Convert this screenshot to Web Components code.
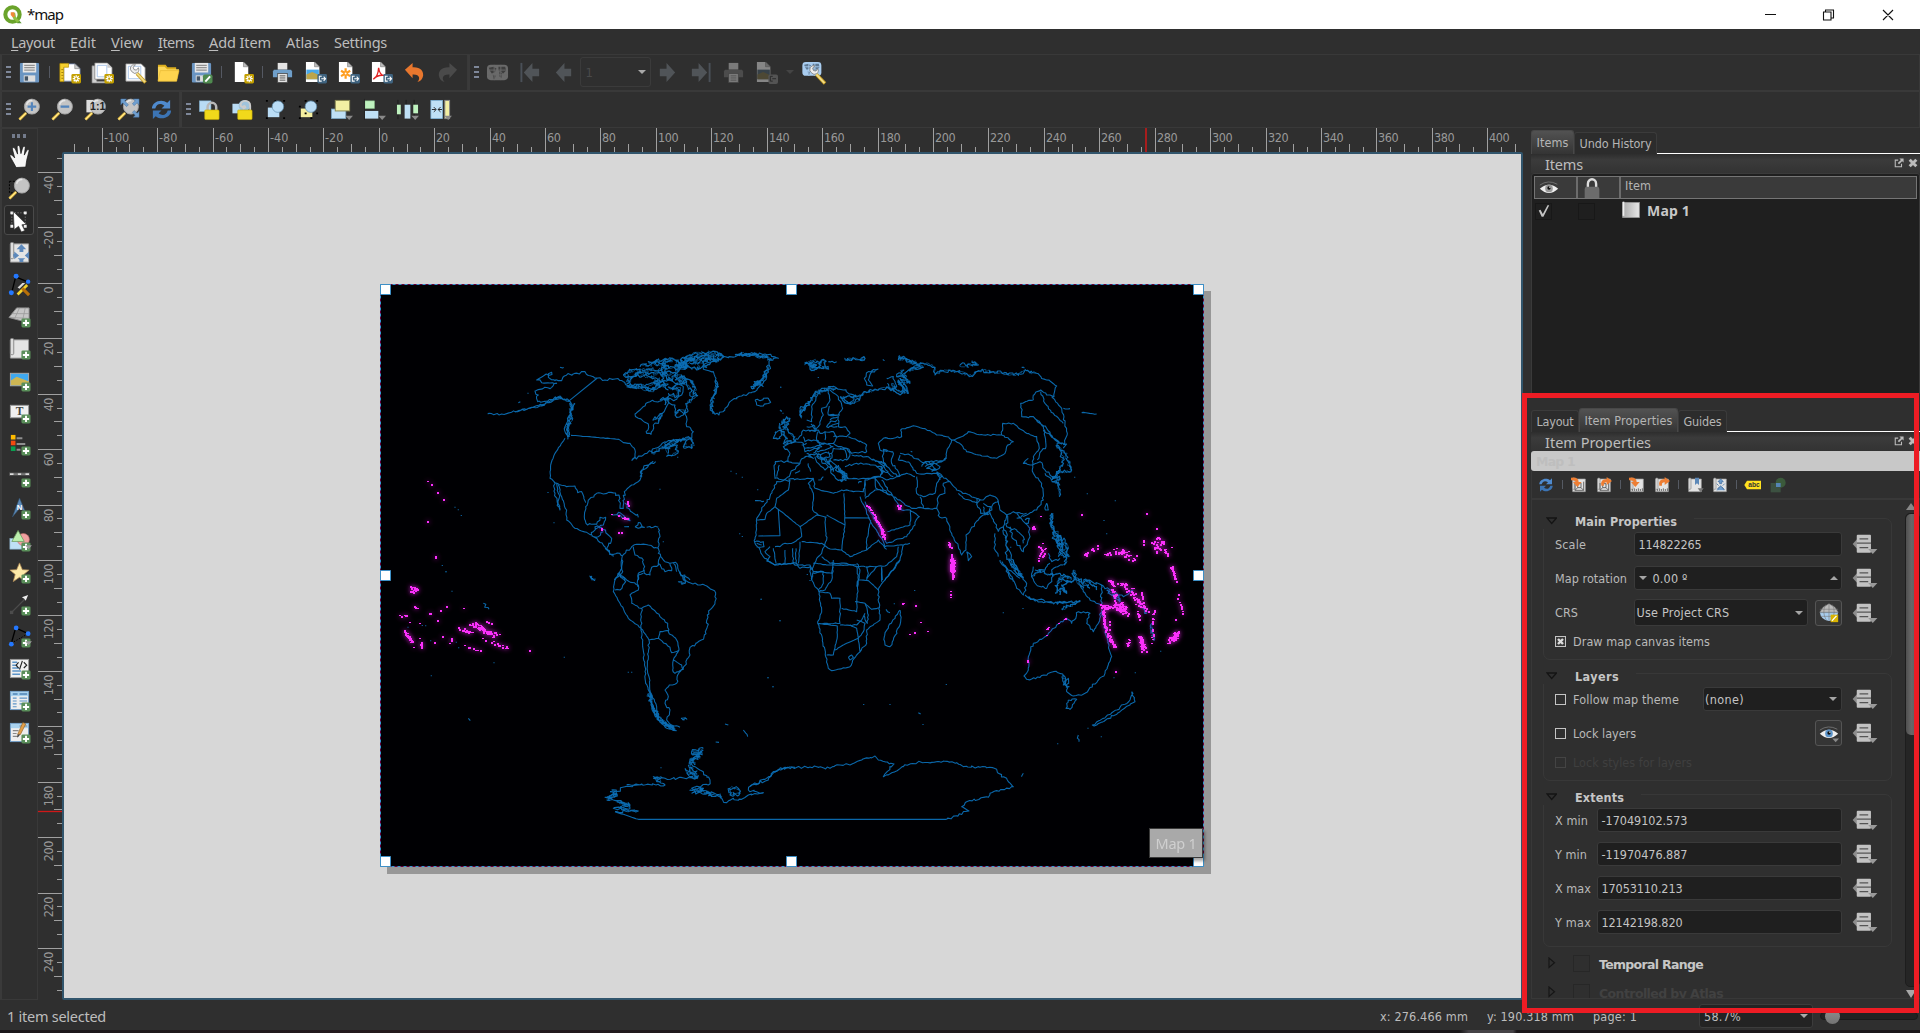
<!DOCTYPE html>
<html lang="en">
<head>
<meta charset="utf-8">
<title>*map</title>
<style>
html,body{margin:0;height:100%;overflow:hidden;background:#2f2f2f}
</style>
</head>
<body>
<layout-window></layout-window>
<script>
const UI = '"Noto Sans","Open Sans",sans-serif';
const DLG = '"DejaVu Sans Condensed","DejaVu Sans",sans-serif';
function define(name, css, html, ready) {
  const tpl = document.createElement('template');
  tpl.innerHTML = '<style>*{box-sizing:border-box}' + css + '</style>' + html;
  customElements.define(name, class extends HTMLElement {
    connectedCallback() {
      if (this.shadowRoot) return;
      this.attachShadow({mode: 'open'}).appendChild(tpl.content.cloneNode(true));
      if (ready) ready.call(this, this.shadowRoot);
    }
  });
}

/* Text whose letter spacing is tuned to a nominal run width. */
define('fit-text', ':host{display:inline-block;white-space:pre;flex:none}', '<slot></slot>', function () {
  const w = +this.getAttribute('w');
  if (!w) return;
  const n = this.textContent.length;
  const nat = this.getBoundingClientRect().width;
  this.style.letterSpacing = ((w - nat) / n).toFixed(3) + 'px';
});

/* ---------- icons, 24 x 24 grid ---------- */
const PLUS = '<rect x="14" y="14" width="9.500" height="9.500" rx="1.500" fill="#5a8f5a"/><path d="M18.800 15.500v6.500M15.500 18.800h6.500" stroke="#fff" stroke-width="2"/>';
const GEAR = '<rect x="14" y="13.500" width="10" height="10" rx="1.500" fill="#c4a000"/><path d="M19 14.800v7.400M15.300 18.500h7.400M16.400 15.900l5.200 5.200M21.600 15.900l-5.200 5.200" stroke="#fff" stroke-width="1.300"/><circle cx="19" cy="18.500" r="1.200" fill="#c4a000"/>';
const EXP = '<rect x="14" y="13.500" width="10" height="10" rx="1.500" fill="#3f637f"/><path d="M18.500 16h-2.500v5h2.500M18 18.500h4M20.500 16.300l2 2.200-2 2.200" stroke="#fff" stroke-width="1.100" fill="none"/>';
const PAGE = '<path d="M4 1h9l5 5v16H4z" fill="#fff"/><path d="M13 1v5h5z" fill="#bbb" stroke="#777" stroke-width=".6"/>';
const MAG = '<path d="M1.500 22.500l7-7" stroke="#f2c94c" stroke-width="2.800"/><path d="M1.500 22.500l7-7" stroke="#fff3b0" stroke-width=".8"/><circle cx="14.500" cy="9" r="7.800" fill="#c4c4c4" stroke="#a5a5a5"/><path d="M9 7a6 6 0 0 1 6-4.500" stroke="#e6e6e6" stroke-width="1.600" fill="none"/>';
const FLOPPY = '<rect x="2" y="2" width="20" height="20.500" rx="1" fill="#6a95c2"/><rect x="5" y="2" width="14" height="10" fill="#e6e6e6"/><path d="M6.500 4.500h11M6.500 7h11M6.500 9.500h11" stroke="#777"/><rect x="6" y="15" width="12" height="6.500" fill="#dedede"/><rect x="7" y="16" width="3.500" height="4.500" fill="#456"/>';
const PRN = (a,b) => `<rect x="7" y="2" width="10" height="7" fill="${b}"/><path d="M3 9h18l1 2v6H2v-6z" fill="${a}"/><rect x="7" y="13" width="10" height="9.500" fill="${b}" stroke="#444" stroke-width=".8"/><path d="M9 15.500h6M9 17.700h6M9 20h6" stroke="#555"/>`;
const ARW = '<path d="M16 18.500h8l-4 4.500z" fill="#8a8a8a"/>';
const ARR = (c) => `<path d="M20 8v8h-7v6L4 12l9-10v6z" fill="${c}"/>`;
const SHEET = '<path d="M2.500 3h19v19h-19z" fill="#e4e4e4" stroke="#9a9a9a"/><rect x="2.500" y="1.500" width="3.500" height="17" rx="1.500" fill="#ddd" stroke="#888"/>';
const EYE = (c) => `<path d="M1 13q11-10 22 0-11 10-22 0z" fill="#eee"/><circle cx="12" cy="12.500" r="4.600" fill="${c}"/><circle cx="12" cy="12" r="2" fill="#111"/><circle cx="13" cy="11" r=".8" fill="#fff"/><path d="M1 8.500q10-7 21-1" fill="none" stroke="#777"/>`;
const UNDO = (c) => `<path d="M2 9l8-7v4.500c8-.5 11.500 3.500 11 9-.5 3.500-3 6-6 6.500 3-3 3-8.500-5-8v4z" fill="${c}"/>`;
const REFR = '<path d="M2 11C2 4 12 0 18 5l3-3v9h-9l3-3C11 5 7 6 5.500 11z" fill="#4f8ace"/><path d="M22 13c0 7-10 11-16 6l-3 3v-9h9l-3 3c4 3 8 2 9.500-3z" fill="#3c74b4"/>';
const MAPW = (a,b) => `<rect x="1" y="4" width="22" height="16" rx="4" fill="${a}"/><path d="M3 7l5-1 3 2-2 4-3 1-2-3zM7 14l3 1-1 4h-1zM13 6l7 0 1 4-3 3-3-2-2-1zM14 11l3 2-1 5-2-2z" fill="${b}"/><path d="M1.500 9.500h21M1.500 14.500h21M8.500 4v16M15.500 4v16" stroke="${a}" stroke-width="1"/>`;
const WRENCH = '<path d="M7 6a4.500 4.500 0 0 1 5-2l-2.500 2.500 1 2.500 2.500 .5L15 7c1 2 .5 4-1 5.200l-3 .8-3-2A4.500 4.500 0 0 1 7 6z" fill="#eee" stroke="#777" stroke-width=".8"/><path d="M13.500 13l9 9.500" stroke="#c49a20" stroke-width="3.600"/><path d="M13.500 13l8.500 9" stroke="#f2dc84" stroke-width="2"/>';
const BADSQ = '<path d="M14 14h9v9h-9z" fill="#d9b300"/><path d="M15.500 21.500l5.500-6" stroke="#fff" stroke-width="1.600"/>';
const CORN = '<path d="M2 2h2v2H2zM20 2h2v2h-2zM2 20h2v2H2zM20 20h2v2h-2zM11 2h1.500v1.500H11z" fill="#000"/>';
const ICONS = {
  qgis: '<path d="M17 16l5.500 6h-5l-4-4z" fill="#589632"/><circle cx="12" cy="12" r="8.200" fill="none" stroke="#6aa32b" stroke-width="4.600"/><path d="M11 10h4l1 5 4 4.500-2.500 1.800-5-5z" fill="#8dc040"/><path d="M10 9.500h4l.8 4.700-2.500 1-2.300-2.700z" fill="#f0883a"/>',
  save: FLOPPY,
  newlayout: '<path d="M2 3h4v18H2z" fill="#e9b800"/><path d="M6 3h12l5 5v13H6z" fill="#fff" stroke="#7a90b8" stroke-width=".8"/><path d="M17.500 3v5H23z" fill="#ccc" stroke="#777" stroke-width=".6"/><path d="M2 2.500h9v4H6v15H2z" fill="#f5cf2e" stroke="#b38b00" stroke-width=".7"/><path d="M3.500 9h2M3.500 12h2M3.500 15h2M3.500 18h2" stroke="#8a6a00" stroke-width=".8"/>' + GEAR,
  duplicate: '<path d="M1 5h5v16h13v2H1z" fill="#cfcfcf" stroke="#777" stroke-width=".7"/><path d="M4 2h13l5 5v12H4z" fill="#fff" stroke="#777" stroke-width=".8"/><path d="M6.500 4.500h10v12h-10z" fill="none" stroke="#a9c4e8"/><path d="M17 2v5h5z" fill="#ccc"/>' + GEAR,
  manager: '<path d="M2 3h16l4 4v14H2z" fill="#fff" stroke="#999" stroke-width=".8"/><path d="M4.500 5.500h13v13h-13z" fill="none" stroke="#a9c4e8"/>' + WRENCH,
  folder: '<path d="M1 4h8l2 2.500h9V10H1z" fill="#dcae1e"/><path d="M1 21V6h7l2.500 2.500H23L20.500 21z" fill="#fbd75b"/><path d="M1 21L3.500 10H23l-2.500 11z" fill="#ffd54f" stroke="#e4b52d" stroke-width=".6"/>',
  saveas: FLOPPY + '<rect x="13.500" y="14" width="10" height="9.500" rx="2" fill="#4f8a4f"/><path d="M16 21.500l5-5.500" stroke="#fff" stroke-width="2"/>',
  newpage: PAGE + GEAR,
  print: PRN('#6f9fca', '#e4e4e4'), printoff: PRN('#4c4c4c', '#7a7a7a'),
  image: '<g transform="translate(-2)">' + PAGE + '<rect x="4.500" y="9" width="13" height="10" fill="#4aa8e8"/><path d="M4.500 19v-5l6-2.500 7 3V19z" fill="#bda54a"/></g>' + EXP,
  imageoff: '<g opacity=".42"><g transform="translate(-2)">' + PAGE + '<rect x="4.500" y="9" width="13" height="10" fill="#445b6c"/><path d="M4.500 19v-5l6-2.500 7 3V19z" fill="#776c3c"/></g><rect x="14" y="14" width="10" height="10" rx="2" fill="#888"/><path d="M18.500 16h-2.500v5h2.500M18 18.500h4" stroke="#222" fill="none"/></g>',
  svg: '<g transform="translate(-2)">' + PAGE + '<path d="M11 7.500v11M6.200 10.200l9.600 5.600M15.800 10.200l-9.600 5.600" stroke="#ff9d1e" stroke-width="2.300"/><circle cx="11" cy="13" r="1" fill="#fff"/></g>' + EXP,
  pdf: '<g transform="translate(-2)">' + PAGE + '<path d="M5.500 19q5-3 5.500-12 1 8 6 8-7-1-11.500 4z" fill="none" stroke="#e02020" stroke-width="1.400"/></g>' + EXP,
  undo: UNDO('#e8772e'), redo: '<g transform="matrix(-1 0 0 1 24 0)">' + UNDO('#4a4a4a') + '</g>',
  atlas: MAPW('#6a6a6a', '#3e3e3e'),
  first: '<path d="M2.500 2v20" stroke="#4a5058" stroke-width="2"/><g transform="translate(1)">' + ARR('#505458') + '</g>', prev: ARR('#505458'),
  next: '<g transform="matrix(-1 0 0 1 24 0)">' + ARR('#505458') + '</g>',
  last: '<g transform="matrix(-1 0 0 1 24 0)"><path d="M2.500 2v20" stroke="#4a5058" stroke-width="2"/><g transform="translate(1)">' + ARR('#505458') + '</g></g>',
  atlasset: '<g transform="translate(-.5 -2.500) scale(.9)">' + MAPW('#a9cdf0', '#5d7893') + '</g><g transform="translate(1.500 1)">' + WRENCH + '</g>',
  zin: MAG + '<path d="M14.500 4.500v9M10 9h9" stroke="#5485bc" stroke-width="2.200"/>',
  zout: MAG + '<path d="M10 9h9" stroke="#5485bc" stroke-width="2.400"/>',
  zone: '<path d="M2.500 2h8v13h-8z" fill="#ddd"/>' + MAG + '<text x="14.300" y="12.800" font-family="Liberation Sans,sans-serif" font-weight="700" font-size="11" fill="#222" text-anchor="middle">1:1</text>',
  zfull: MAG + '<path d="M4 1h6l-2 2 4 4-2 2-4-4-2 2zM23 1h-6l2 2-3 3 2 2 3-3 2 2zM23 20h-6l2-2-3-3 2-2 3 3 2-2z" fill="#6f9fd0" stroke="#44709f" stroke-width=".5"/>',
  refresh: REFR,
  lock: '<rect x="1.500" y="3" width="12" height="11" fill="#b9dcf5" stroke="#7fb0d0" stroke-width=".6"/><path d="M10 13V9.500a4.500 4.500 0 0 1 9 0V13" fill="none" stroke="#b8b8b8" stroke-width="2.600"/><rect x="7" y="12.500" width="15" height="10" rx="1" fill="#f1d91b" stroke="#c4a900" stroke-width=".6"/>',
  unlock: '<rect x="1.500" y="6" width="12" height="10" fill="#b9dcf5"/><circle cx="14" cy="8" r="6" fill="#9fc3dc"/><path d="M20 14V8a5 5 0 0 0-10 0l2 1.500q2-2.500 3 0l-2.500 2" fill="none" stroke="#ccc" stroke-width="2"/><rect x="7" y="12.500" width="15" height="10" rx="1" fill="#f1d91b" stroke="#c4a900" stroke-width=".6"/>',
  group: CORN + '<rect x="4" y="10" width="12" height="10" fill="#b9dcf5"/><circle cx="14.500" cy="9" r="6" fill="#b9dcf5" stroke="#5f8fb0" stroke-width=".7"/>',
  ungroup: '<rect x="4" y="11" width="12" height="9" fill="#f5efa0"/><circle cx="14.500" cy="9" r="6" fill="#b9dcf5" stroke="#5f8fb0" stroke-width=".7"/><path d="M8 2h2v2H8zM20 2h2v2h-2zM2 8h2v2H2zM2 20h2v2H2zM20 15h2v2h-2zM14 20h2v2h-2zM8 15h2v2H8z" fill="#000"/>',
  raise: '<rect x="1.500" y="11.500" width="15" height="10" fill="#bfe0f5" stroke="#7aa6c2" stroke-width=".8"/><rect x="5.500" y="2.500" width="15" height="11" fill="#f2efa3" stroke="#8b8a55"/>' + ARW,
  align: '<rect x="2" y="3" width="10" height="8" fill="#bff2bf" stroke="#84b884" stroke-width=".6"/><rect x="2" y="13.500" width="14" height="8" fill="#bfe0f5"/><path d="M1.500 1v22" stroke="#222"/>' + ARW,
  distribute: '<path d="M2 2v20M10.500 2v20M19 2v20" stroke="#1b1b1b"/><rect x="1" y="7" width="4" height="10" fill="#bff2bf"/><rect x="9" y="7" width="6" height="14.500" fill="#bfe0f5"/><rect x="18" y="7" width="5" height="9" fill="#bff2bf"/>' + ARW,
  resize: '<rect x="2" y="2.500" width="12" height="19" fill="#bfe0f5" stroke="#7fb4d8" stroke-width=".8"/><path d="M3 12h4M5 9.500L7.500 12 5 14.500M13.500 12h-4M12 9.500L9.500 12l2.500 2.500" stroke="#222" fill="none"/><rect x="16.500" y="2.500" width="5" height="19" fill="#f2efa3" stroke="#888"/>' + ARW,
  hand: '<path d="M8.500 23.500L3 13.500q-2.500-4.500 1-3L7 13.500 4.500 4q1-2.500 2.800-.5L10 9.500l-.5-8q1.500-2 2.800 0L13.500 9l2-7q1.800-1.500 2.500.5L17 10.500l3-5.500q2-1 2 1L19.500 16 18.500 23z" fill="#f6f6f6" stroke="#111" stroke-width=".7"/>',
  zoombox: '<path d="M1.500 4.500h8v12h-8z" fill="none" stroke="#000" stroke-dasharray="2 1.500"/>' + MAG,
  select: '<path d="M4 4h14v14H4z" fill="none" stroke="#999" stroke-dasharray="1 2"/><path d="M2.500 2.500h3v3h-3zM16.500 2.500h3v3h-3zM2.500 16.500h3v3h-3zM16.500 16.500h3v3h-3z" fill="#eee"/><path d="M5.500 2.500l13.500 13.500-4.500 .5 3 6-3.500 1.500-3-6-4.500 3.500z" fill="#fff" stroke="#333" stroke-width=".7"/>',
  movec: SHEET + '<path d="M14 3.500l5 5h-3v3h-4v-3H9zM12 22v-2.500l-2-1.500h8l-2 1.500V22zM6.500 11l5 4-5 4v-2.500h-1v-3h1zM22 11l-4.500 4 4.500 4z" fill="#5c88bb"/>',
  nodes: '<path d="M4 20L8 4l12 5" stroke="#000" stroke-width="1.400" fill="none"/><circle cx="8.500" cy="3.500" r="2.600" fill="#2478ff"/><circle cx="21" cy="9" r="2.300" fill="#2478ff"/><circle cx="3.500" cy="20.500" r="2.600" fill="#2478ff"/><path d="M10 22.500l10-10" stroke="#f3d32c" stroke-width="2.800"/><path d="M15 16l7 7" stroke="#b87009" stroke-width="3.200"/><path d="M10 15l5-4.500 3 0-6 6z" fill="#ddd"/>',
  map3d: '<path d="M1 13l8-10 13 0v15L12 16z" fill="#c6c6c6" stroke="#8c8c8c"/><path d="M4 9l18 0M2 13l20 1M12 3l-5 11M18 3l-3 14" stroke="#999" stroke-width=".8" fill="none"/>' + PLUS,
  addmap: SHEET + PLUS,
  picture: '<rect x="2.500" y="4.500" width="19" height="13" fill="#3fa9f0" stroke="#aaa"/><path d="M3 17v-5l6-4 13 5v4z" fill="#cdb653"/>' + PLUS,
  label: '<rect x="2.500" y="4.500" width="19" height="13" fill="#f0f0f0" stroke="#999"/><text x="12" y="15" font-family="Liberation Serif,serif" font-size="12" font-weight="700" fill="#444" text-anchor="middle">T</text>' + PLUS,
  legend: '<rect x="3" y="2" width="4.800" height="4.800" fill="#ffbb00"/><rect x="3" y="8" width="4.800" height="4.800" fill="#f14a10"/><rect x="3" y="14" width="4.800" height="4.800" fill="#0a9f50"/><path d="M9 5.500h6M9 11.500h9M9 17.500h4" stroke="#8f8f8f" stroke-width="2"/>' + PLUS,
  scalebar: '<rect x="1" y="7.500" width="22" height="4" fill="#484848"/><path d="M2 9.500h4M10 9.500h4M18 9.500h4" stroke="#ddd" stroke-width="2"/><path d="M6 9.500h4M14 9.500h4" stroke="#777" stroke-width="2"/>' + PLUS,
  north: '<path d="M12 1l6 14-6-3-7.500 9z" fill="#5b88b5" stroke="#334f6b" stroke-width=".6"/><text x="12" y="14" font-family="Liberation Sans,sans-serif" font-weight="700" font-size="8" fill="#fff" text-anchor="middle">N</text>' + PLUS,
  shapes: '<rect x="2" y="10" width="15" height="11" fill="#bfe0f5" stroke="#89b2cc" stroke-width=".7"/><circle cx="16" cy="11" r="6.300" fill="#f0a0a0" stroke="#c06a6a" stroke-width=".7"/><path d="M10.500 1.500l6.500 11.500H4z" fill="#bdf0ae" stroke="#6c9a60" stroke-width=".8"/>' + PLUS + '<path d="M18 17h7l-3.500 4z" fill="#999"/>',
  star: '<path d="M12 2l3 7 7 .5-5.500 4.500 2 7.500L12 17l-6.500 4.500 2-7.500L2 9.500 9 9z" fill="#fce9a8" stroke="#b08a55" stroke-width=".8"/>' + PLUS,
  arrow: '<path d="M4 20L18 6" stroke="#4c4c4c" stroke-width="1.300"/><path d="M2 18.500h3.500V22H2z" fill="#4c4c4c"/><path d="M21 2l-2.500 6-1.500-2-2.500-1.500z" fill="#eee"/>' + PLUS,
  nodeadd: '<path d="M3.500 19L8 3l13 6" stroke="#000" stroke-width="1.400" fill="none"/><path d="M3.500 19L21 9" stroke="#000" stroke-dasharray="1.500 1.500"/><circle cx="8.500" cy="3" r="2.500" fill="#2478ff"/><circle cx="21" cy="9" r="2.500" fill="#2478ff"/><circle cx="3.500" cy="20" r="2.500" fill="#2478ff"/>' + PLUS + '<path d="M18 17h7l-3.500 4z" fill="#999"/>',
  html: '<rect x="2.500" y="2.500" width="19" height="19" fill="#f0f0f0" stroke="#999"/><path d="M4.500 5.500h5M4.500 8.500h5M4.500 11.500h7M4.500 14.500h9M4.500 18h8" stroke="#5c94c8" stroke-width="1.600"/><path d="M11 5.500L8.500 8.500 11 11.500M15 4l-3 9M16.500 5.500l3 3-3 3" stroke="#222" fill="none" stroke-width="1.200"/>' + PLUS,
  table: '<rect x="2.500" y="2.500" width="19" height="19" fill="#eee" stroke="#6f9dc8"/><rect x="3" y="3" width="18" height="4.500" fill="#a9d2ee"/><path d="M5 5.200h5M12 5.200h8" stroke="#4d83b5" stroke-width="1.600"/><path d="M5 9.500h4M12 9.500h8M5 12.500h4M12 12.500h8M5 15.500h4M12 15.500h6M5 18.500h4" stroke="#5c94c8" stroke-width="1.200"/>' + PLUS,
  mtable: '<rect x="2.500" y="2.500" width="19" height="19" fill="#eee" stroke="#6f9dc8"/><rect x="3" y="3" width="18" height="4.500" fill="#a9d2ee"/><path d="M5 10h6M5 13h4M5 16h6M12 5.200h8" stroke="#888" stroke-width="1.200"/><path d="M10 14L15.500 1.500l3 1.500L13 14z" fill="#e3a04a" stroke="#8a5a1d" stroke-width=".6"/><path d="M10 14l3 0-3.500 3.500z" fill="#444"/>' + PLUS,
  eyeg: EYE('#999'), eyeb: EYE('#5b93c8') + ARW,
  padlock: '<path d="M7.500 11V7.500a4.500 5 0 0 1 9 0V11" stroke="#ddd" stroke-width="2.600" fill="none"/><path d="M4 13q0-2.500 2.500-2.500h11Q20 10.500 20 13v10H4z" fill="#6c6c6c"/>',
  sheet: '<defs><linearGradient id="g"><stop offset="0" stop-color="#aaa"/><stop offset="1" stop-color="#e8e8e8"/></linearGradient></defs><rect x="2" y="3" width="20" height="18" fill="url(#g)" stroke="#999"/><path d="M3 2v17" stroke="#eee" stroke-width="2"/>',
  check: '<path d="M3 11l3-1 4 7L18 2l3 0L11 22H8z" fill="#c4c4c4"/>',
  setview: SHEET + '<path d="M6 9v11h13V7M6 20l4-4M19 20l-4-4M10 8v8h5V9z" stroke="#555" stroke-width="1.300" fill="none"/><path d="M0 1q11-2 11.500 6.500h4.500L9.500 15 3 7.500h4Q6 4.500 0 5z" fill="#ee7e33"/>',
  getview: SHEET + '<path d="M6 9v11h13V9M6 20l4-4M19 20l-4-4M10 10v6h5v-6z" stroke="#555" stroke-width="1.300" fill="none"/><path d="M8 13q-2-10 8-10V0L24 6l-8 6V8q-5 0-4 5z" fill="#ee7e33"/>',
  setscale: SHEET + '<path d="M5 21v-3M8 21v-4M11 21v-3M14 21v-4M17 21v-3M20 21v-4" stroke="#555" stroke-width="1.300"/><path d="M0 1q11-2 11.500 6.500h4.500L9.500 15 3 7.500h4Q6 4.500 0 5z" fill="#ee7e33"/>',
  getscale: SHEET + '<path d="M5 21v-3M8 21v-4M11 21v-3M14 21v-4M17 21v-3M20 21v-4" stroke="#555" stroke-width="1.300"/><path d="M8 13q-2-10 8-10V0L24 6l-8 6V8q-5 0-4 5z" fill="#ee7e33"/>',
  bookmark: SHEET + '<path d="M12 1h6v11l-3-2.500-3 2.500z" fill="#5c88b8"/><path d="M16 17h9l-4.500 6z" fill="#777"/>',
  interactive: SHEET + '<path d="M13 3l4 4h-2.500v3h-3V7H9zM8 20l5-7 5 7M7 10l3 3M19 10l-3 3M7 19l4-4M19 19l-4-4" stroke="#4e79a8" fill="#6f9fd0" stroke-width="1.300"/>',
  abc: '<path d="M-1 12l4-6.500h21v13H3z" fill="#ffe21f"/><text x="13.500" y="15.500" font-family="Liberation Sans,sans-serif" font-weight="700" font-size="10" fill="#333" text-anchor="middle">abc</text>',
  clip: '<circle cx="16" cy="8.500" r="7.500" fill="#3b5a3b"/><rect x="1" y="9" width="15" height="14" fill="#3c5141"/><path d="M9 9h7v6H9z" fill="#5585b5"/>',
  globe: '<path d="M5 5L12 1l7 4 4 6-22 0z" fill="#bbb" stroke="#888" stroke-width=".6"/><path d="M1 11h22q-1 9-11 10.500Q2 20 1 11z" fill="#a8cdee"/><path d="M1 7.500h22M1 11.500h22M2 16h20M8 2q-5 9 1 19M16 2q5 9-1 19M12 1v20" stroke="#777" fill="none" stroke-width=".7"/>' + BADSQ,
  ddef: '<path d="M-1.500 12L3.500 6.500v11z" fill="#8c8c8c"/><rect x="3" y="2" width="15.500" height="19.500" rx="1" fill="#c2c2c2"/><path d="M6 6.500h9.500M3 11h15.500M6 16h9.500" stroke="#555" stroke-width="1.300"/><path d="M15.500 17.500h10l-5 5.500z" fill="#999"/>',
  float: '<path d="M10 5H3v16h15v-7" fill="none" stroke="#bbb" stroke-width="2.600"/><path d="M13 1h10v10l-3.500-3.500L12 15l-3-3 7.500-7.500z" fill="#bbb"/>',
  close: '<path d="M4 4l16 16M20 4L4 20" stroke="#bbb" stroke-width="7"/>'
};
define('q-icon', ':host{display:inline-flex;flex:none;width:24px;height:24px}svg{width:100%;height:100%;overflow:visible}', '<svg viewBox="0 0 24 24"></svg>', function (r) {
  r.querySelector('svg').innerHTML = ICONS[this.getAttribute('n')] || '';
});

/* ---------- window chrome ---------- */
define('title-bar', `:host{display:flex;align-items:center;height:29px;background:#fff;color:#111;font:15px ${UI};padding-left:1px}
 q-icon{width:21px;height:21px;margin:-1px 4px 0 1px}fit-text{margin-top:-2px}.s{flex:1}svg{margin-right:25px}`,
 `<q-icon n="qgis"></q-icon><fit-text w="36">*map</fit-text><div class="s"></div>
 <svg width="130" height="14" viewBox="0 0 130 14" fill="none" stroke="#111" stroke-width="1.100"><path d="M0 6.500h11M58.500 4h7.500v8h-7.500zM60.500 4V2h8v8h-2M118 2l10 10M128 2l-10 10"/></svg>`);
define('menu-bar', `:host{display:flex;align-items:center;height:25px;padding:0 0 0 11px;gap:15px;color:#bdbdbd;font:14.500px ${UI}}u{text-decoration-thickness:1px;text-underline-offset:2px}`,
 `<fit-text w="44"><u>L</u>ayout</fit-text><fit-text w="26"><u>E</u>dit</fit-text><fit-text w="32"><u>V</u>iew</fit-text><fit-text w="36"><u>I</u>tems</fit-text><fit-text w="62"><u>A</u>dd Item</fit-text><fit-text w="33">Atlas</fit-text><fit-text w="53">Settings</fit-text>`);

/* A tool bar lists its buttons in the "icons" attribute; "|" draws a separator. */
define('tool-bar', `:host{display:flex;align-items:center;height:37px;border:1px solid #393939;border-left:2px solid #3a3a3a;padding:0 0 1px 4px;flex:none}
 .h{width:5px;height:12px;background:repeating-linear-gradient(#7e8799 0 2px,transparent 2px 5px);flex:none}
 .b{width:33px;display:flex;justify-content:center;align-items:center;flex:none}
 .s{width:7.500px;height:12px;background:linear-gradient(90deg,transparent 3px,#555963 3px 4px,transparent 4px);flex:none}
 .c{width:71px;height:30px;border:1px solid #3b3b3b;border-radius:3px;display:flex;align-items:center;justify-content:space-between;padding:0 4px 0 5px;color:#4a4a4a;font:13px ${DLG};margin:0}
 .t{border:4px solid transparent;border-top:4px solid #a9a9a9;border-bottom:0}.d{width:14.500px;display:flex;justify-content:center}.d .t{border-top-color:#444}
 q-icon{width:23px;height:23px}`,
 '<div class="h"></div><div style="width:1.500px"></div>', function (r) {
  for (const k of this.getAttribute('icons').split(' ')) {
    const e = document.createElement('div');
    if (k === '|') e.className = 's';
    else if (k === 'combo') { e.className = 'c'; e.innerHTML = '<span>1</span><i class="t"></i>'; }
    else if (k === 'drop') { e.className = 'd'; e.innerHTML = '<i class="t"></i>'; }
    else { e.className = 'b'; e.innerHTML = `<q-icon n="${k}"></q-icon>`; }
    r.appendChild(e);
  }
});
define('tool-box', `:host{display:flex;flex-direction:column;align-items:center;width:38px;flex:none;border:1px solid #393939;border-left:2px solid #3a3a3a;padding:5px 1px 0 0}
 .h{width:14px;height:4px;background:repeating-linear-gradient(90deg,#737b8b 0 3px,transparent 3px 5.500px);margin-bottom:2px;flex:none}
 .b{width:30px;height:30px;margin:1px 0;display:flex;align-items:center;justify-content:center;border:1px solid transparent;border-radius:3px;flex:none}
 .on{border-color:#4a4a4a;background:#292929}q-icon{width:23px;height:23px}`, '<div class="h"></div>', function (r) {
  'hand zoombox select movec nodes map3d addmap picture label legend scalebar north shapes star arrow nodeadd html table mtable'.split(' ').forEach(k => {
    const e = document.createElement('div');
    e.className = 'b' + (k === 'select' ? ' on' : '');
    e.innerHTML = `<q-icon n="${k}"></q-icon>`;
    r.appendChild(e);
  });
});

/* ---------- rulers: 2.771 px per millimetre ---------- */
const MM = 2.771;
define('h-ruler', `:host{display:block;height:24px;margin-left:24px}svg{display:block}text{font:12.500px ${DLG};fill:#999}`, '<svg width="1461" height="24"></svg>', function (r) {
  let s = '';
  for (let v = -110; v <= 410; v += 5) {
    const x = Math.floor(379.3 + v * MM) - 62 + .5;
    if (x > 1459) break;
    s += `<path d="M${x} ${v % 20 === 0 ? 0 : v % 10 === 0 ? 16 : 19}V24" stroke="#a0a0a0"/>`;
    if (v % 20 === 0) { const n = String(v).length - (v < 0 ? .35 : 0); s += `<text x="${x + 1.500}" y="14" textLength="${(n * 6.900).toFixed(1)}">${v}</text>`; }
  }
  r.querySelector('svg').innerHTML = s + '<path d="M1084 0V24" stroke="#d01818" stroke-width="1.500"/>';
});
define('v-ruler', `:host{display:block;width:24px;flex:none}svg{display:block}text{font:12.500px ${DLG};fill:#999}`, '<svg width="24" height="848"></svg>', function (r) {
  let s = '';
  for (let v = -45; v <= 255; v += 5) {
    const y = Math.floor(283.4 + v * MM) - 152 + .5;
    s += `<path d="M${v % 20 === 0 ? 0 : v % 10 === 0 ? 16 : 19} ${y}H24" stroke="#a0a0a0"/>`;
    if (v % 20 === 0) { const n = String(v).length - (v < 0 ? .35 : 0), w = n * 6.900; s += `<text transform="translate(14.500 ${y + w + 3}) rotate(-90)" textLength="${w.toFixed(1)}">${v}</text>`; }
  }
  r.querySelector('svg').innerHTML = s + '<path d="M0 659.500H24" stroke="#d01818" stroke-width="1.300"/>';
});

/* ---------- world map ---------- */
/* Each sheet holds lines at a third of a pixel; entries are "roughness: x y, x y, ...". */
const SHEETS = [
 [375, 280, `
 4:338 402,380 402,430 392,470 382,510 372,550 352,583 364|4:420 395,460 385,500 378,540 358,560 355|6:583 362,550 350,520 362,488 365,490 345,480 333,505 325,530 322,545 310,500 308,485 300,505 288,530 277,520 292,540 302,560 302,568 288,600 280,630 275,655 290,667 294
 0:667 294,583 362|5:583 362,592 385,580 410,570 440,572 460,578 478|7:600 370,585 395,590 410,575 450,585 465|7:590 370,588 400,580 430,578 470|4:555 262,566 262|4:430 368,436 365
 5:667 294,690 300,720 297,745 305,760 318,780 312,800 322,830 328,850 310,880 300,905 310,925 320,920 345,900 360,870 355,860 362,825 365,800 385,780 402,790 415,820 432,815 460,828 463,835 435,850 430,860 405,872 385,880 365,900 375,900 395,905 412,925 405,932 390,935 440,955 455,950 475,920 480,880 482,840 505,805 525,770 542
 1:588 466,732 478|2:732 478,745 488,765 490,780 510,780 530,770 542|7:830 520,870 500,900 490,940 470,955 490,950 505,925 500,935 480|7:875 530,910 515,900 495,870 505,880 520|7:860 500,890 485,930 478
 9:900 300,925 290,945 300,960 320,955 335,968 347,950 360,935 380,930 400|8:910 300,935 315,950 330,950 350|9:745 285,770 270,795 272,770 292,745 285|9:755 305,790 285,830 290,860 305,810 318,755 320|10:795 260,830 250,870 255,850 270,800 268|10:870 240,905 240,920 260,900 285,870 275,870 250|10:860 280,890 300,920 285,935 305,900 315|10:880 320,915 330,905 350,880 340|10:840 300,855 320,880 312|9:870 262,935 265,900 255|9:780 280,830 278,880 285|9:755 312,800 325,835 330,860 318|9:860 265,860 300,880 330|9:820 245,860 242,890 240
 9:835 420,860 400,850 425|9:855 360,880 350,870 375|8:900 400,915 390,930 400|10:905 245,940 260,925 245,960 235,900 260
 9:915 240,950 225,1000 217,1040 222,1045 232,1010 245,980 262,950 265,930 255,915 240|9:940 240,970 232,1010 230|9:930 232,965 240,1000 235,1030 240|9:945 250,985 245,1015 232|8:960 228,1000 224,1040 228
 5:1045 230,1080 230,1130 218,1170 222,1210 235,1185 240,1185 260,1175 290,1160 315,1140 335,1100 348,1065 365,1050 385,1032 405,1015 398,1005 375,1015 350,1025 325,1020 290,1015 275,985 268,985 255,1010 245,1045 230|7:1080 225,1130 226,1180 232|9:1180 255,1170 290,1130 325,1155 305,1165 320|9:1175 270,1160 300,1135 315|8:1012 400,1010 370,1020 330,1030 320,1022 300|7:1090 222,1140 222,1190 238
 5:1140 360,1155 362,1180 355,1187 367,1165 378,1145 375,1140 360
 5:842 545,800 570,795 600,770 615,748 635,745 685,735 685,732 645,700 637,665 640,640 660,632 680,628 710,638 735,665 733,675 712,692 712,685 735,660 745|6:835 545,805 565,795 590
 2:570 475,540 520,527 555,525 595,540 608|3:540 608,575 620,600 618,608 638,620 635,632 668|3:550 615,560 650,575 690,575 720,600 745,635 757,650 765,690 800,710 825,735 820,742 828|5:537 605,540 640,548 670,555 690,550 640,545 610
 5:650 765,660 740,680 742,700 765,710 775,695 805,715 830|4:650 768,670 770,685 755|5:710 705,735 698,765 722,750 715,725 702|6:750 670,765 690,790 712|6:748 740,762 740|6:780 740,790 728,808 742,780 740|6:815 742,835 742,850 742|4:850 745,855 770,848 805
 4:742 828,740 880,718 900|5:742 828,770 800,785 793,820 795,850 805,850 820,870 845,905 850,915 880,945 900|4:775 800,780 825,805 840,808 880,825 885,830 862,850 855,855 830|4:850 850,870 875,890 872,885 850|4:895 850,905 875|4:805 880,790 885,790 900|4:728 880,750 900|6:645 890,655 895`],
 [750, 280, `
 6:155 415,150 385,175 370,190 345,215 325,245 320,280 330,312 345,312 358,290 370,270 350|8:150 400,165 385,180 365,195 340,230 328,260 325|7:152 410,155 390,172 378|3:170 420,185 425,185 380,205 340,235 330,240 360,230 380,215 385,220 405,205 440,195 448,183 432|3:240 330,265 350,278 385,265 405,235 405,238 378
 7:270 350,300 372,330 355,345 335,385 330,410 322,430 332,450 345,460 335,445 300,475 340,450 295,480 310,455 285,490 262,520 250,555 262,555 285,580 272,620 275,665 288,685 272,730 275,790 285,830 272,860 280|5:860 280,890 300,920 318,912 350,890 345,872 330,850 345,850 360|7:470 240,520 262,480 268|7:460 270,440 290,470 290|7:280 350,310 350,340 345|7:425 310,440 330,465 340
 4:385 267,355 275,343 295,350 315,368 318,355 300,362 280,385 267|5:410 295,430 290,440 320,425 330,412 310
 4:850 360,812 370,815 410,850 410,880 440,885 470,888 500,875 512,862 540|3:872 335,885 370,910 400,940 430|3:905 350,935 385,945 430,952 460,940 495|3:852 412,890 445,915 480,935 492,900 465,880 450|4:940 385,960 386
 3:605 480,590 470,560 465,540 452,490 437,452 450,455 470,430 475,400 475,385 490,390 510,412 515|3:605 480,590 515,585 540,550 545,525 545,515 560
 3:605 480,635 495,650 515,690 525,740 535,765 520,770 500,790 485,755 465,700 465,655 455,640 468,605 480|3:755 465,758 430,790 430,830 460,860 470,868 505,850 530,848 555,820 550,835 535
 4:848 555,850 580,875 610,880 660,860 690,830 705,800 715|4:848 555,870 545,885 570,910 590,905 600,885 580
 5:428 515,400 508,400 540,425 575,445 590,445 575,425 550,428 515|4:450 520,480 525,520 548,545 555,560 550,590 535|4:450 525,445 540,480 550,500 580,560 580,570 600|5:535 545,560 570,530 565,550 552|5:525 560,550 548,570 560,545 575
 3:500 590,500 640,520 650,555 640,560 610,575 590,560 575|3:390 590,410 600,440 590,470 580,495 590|3:510 650,520 685|4:395 600,430 650,465 675,485 685,520 685,560 685,570 712,590 715
 3:560 685,565 650,585 640,580 610,600 605|3:560 575,600 605,620 630,680 655,700 660,720 645,735 650,745 665|3:625 640,640 655,680 668,680 655
 3:590 715,605 760,625 800,635 825,648 810,648 765,685 720,700 705,720 700,735 730,745 755|5:690 660,680 672,692 700,712 700,722 680,700 670|5:700 680,705 705,715 695|4:650 815,665 830,655 842,650 815
 5:745 665,750 690,770 705,760 740,770 760,770 800,790 840,815 890|5:770 705,790 695,812 700,830 700|5:770 705,770 740,800 750,820 770,820 790|5:800 700,835 740,840 770,820 815,800 790,785 770,780 740|4:825 720,838 715,835 730,825 730|4:735 760,735 810,745 830|5:745 660,725 680,720 700
 5:745 755,760 740,768 790,770 830,805 870|6:755 845,775 870,810 895|4:890 670,895 690,886 690,890 670
 7:905 700,903 740,915 770,905 730,905 700|9:920 765,950 790,955 830,930 810,920 765|9:910 770,935 800,925 830|9:915 755,935 775,945 810|5:895 820,905 845,930 835|7:845 890,870 870,900 885,930 880,950 890|8:930 820,950 835,945 855
 7:905 600,925 575,955 575,965 570,945 520,920 495,935 520,940 550,915 590|7:905 605,925 608,928 650|7:905 590,930 595,920 610|5:920 490,950 492,940 505
 4:120 600,80 605,60 650,20 715,15 790,40 830,75 855,130 850,150 865,180 860,185 900|3:115 598,190 595,195 625,250 640,275 630,340 635,345 600,390 590|3:330 650,360 720,385 760,402 790,405 800,460 795,480 790|2:460 795,450 840,430 870,405 900
 1:75 680,150 740,200 705,230 712|1:230 705,285 735,282 640|1:20 720,45 718,50 700,75 680,80 655,115 630,120 600|0:85 690,90 767,25 768|2:190 595,175 610,190 640,188 690,205 705|0:285 713,360 714|2:150 740,155 770,125 790,105 790,90 800,75 800
 2:225 712,230 780,215 820,200 835|2:285 735,275 810,300 830,350 810,350 780,362 720|2:155 785,215 790,235 805|2:105 810,105 850|2:128 805,130 850|2:150 785,145 850|2:60 800,45 815,60 830,50 845|3:15 785,40 785,42 800,20 800|2:70 805,78 850|3:20 790,35 795|2:138 805,138 850
 2:215 830,240 850,290 850,320 860,380 860,405 858,440 830,445 800|2:350 810,385 780,410 808|2:235 805,275 810|2:190 880,215 875,245 880,250 860|2:320 860,325 900|2:380 860,350 895|0:395 865,397 900|2:200 835,185 870
 3:345 665,405 775,410 790,470 770,508 710,480 690,455 690,430 650,400 630,375 590|2:412 755,480 735,482 690|2:345 655,375 630,400 630|2:345 600,345 650|2:375 595,378 625,420 645
 4:75 545,75 595,105 598,130 570,150 550,115 545,75 545|2:88 555,80 590|5:115 545,120 520,100 500,135 485,155 465|5:150 550,165 530,200 520,215 545,235 560,225 570,205 550,195 530|6:235 560,250 585,275 605,295 595,270 565,265 555|5:215 535,240 545,245 520,220 520,200 530,240 550|4:285 560,320 550,370 555,395 560,390 590,340 595,290 595|8:265 565,285 585,270 600|8:255 560,275 580,290 600|8:275 570,290 590
 4:155 465,160 450,205 450,210 460,250 455,260 470,250 490,215 490,190 480,165 485,160 470|3:205 455,200 480,215 500,165 515,160 490,135 485|3:250 470,290 470,300 460,285 440,265 440,265 410,240 420|4:250 490,265 500,290 505,305 520,350 515,350 495,320 480,295 470|4:250 540,290 540,300 520,290 505,250 505,245 520|4:305 525,350 530,385 545,415 575|4:365 540,405 550,395 570,430 590|5:235 540,265 560,245 570,235 545|4:170 520,190 535,175 530|5:260 420,240 425,230 440,262 440|6:170 440,190 435,200 450,175 450
 3:165 505,195 500,225 490,250 500|3:200 515,225 510,245 500|4:205 520,220 535,240 530,235 515|4:225 545,245 560,250 575|3:270 505,285 510,290 535|4:375 545,395 545,410 560|4:380 560,400 575,390 585|3:225 455,225 480|3:235 405,270 405|3:190 520,210 500|4:240 440,265 430|4:155 495,170 490
 7:95 430,110 410,120 415,108 440,130 470,135 485,100 490,112 475,95 455,88 430|8:95 435,105 425,100 450|6:75 455,95 450,90 475,70 475,75 455|5:175 550,182 575|6:205 600,220 590|4:325 610,335 605|5:135 580,150 572
 9:165 250,220 240,235 265,180 268,200 255,165 250|9:175 255,205 262,215 248|9:285 240,345 235,330 242|9:445 230,500 250|8:445 240,465 232|9:630 255,685 255,665 246|5:995 398,1040 402|5:235 245,260 245|3:482 514,487 516|5:815 262,822 262|4:90 390,95 395|5:15 662,42 664`],
 [375, 560, `
 2:740 0,740 25,720 60,715 95,735 130,760 175,798 205|3:798 205,803 260,810 320,812 370,825 400,830 440,850 480,875 505,905 512|8:820 400,835 440,850 470,880 500,900 510|8:845 465,865 490,900 505|7:835 450,855 482,895 505,870 490|7:825 400,830 430,838 460
 4:915 35,925 60,945 68,990 76,1022 98,1020 125,997 165,997 200,985 238,945 262,945 285,925 325,908 345,905 370,883 375,870 390,880 410,870 430,885 450,875 480,890 495,915 502|7:910 65,930 70,925 50
 3:800 145,798 205,822 240,817 320,828 400,845 440,848 470|3:730 38,755 60,790 75,790 90,765 105,770 130,800 145,820 135,855 170,878 190,880 215,905 240,912 270,890 278,885 262,850 235,822 240|2:850 235,855 215,880 212|3:912 270,895 300,893 330,900 340,925 328,920 315,895 300
 3:720 90,735 90,752 65,730 40|3:788 80,790 40,808 30|8:645 50,660 60|7:918 475,936 478|5:1050 492,1060 495|5:1105 510,1118 530|5:1022 546,1032 547|6:325 130,342 148|4:280 475,286 482
 6:985 570,960 590,945 605,960 620,985 635,1005 660,1000 675,950 685,960 695,1000 700,1040 715,1055 728,1075 715,1100 718,1120 705,1165 698,1120 690,1130 675,1180 660,1195 635,1230 622,1260 622|9:985 565,950 575,975 590,945 600,960 615|9:930 625,955 640,965 655,935 640|9:945 690,985 685,970 695|9:955 580,980 575,955 605|9:940 615,960 635,970 650|9:950 700,980 692,1010 705
 5:970 645,960 655,870 655,835 650,845 665,870 675,800 672,750 680,715 700,690 712,715 720,755 730,765 745,715 745,790 753,720 755|9:705 695,725 705,695 720|9:725 725,765 735,735 740|9:835 655,860 652,850 665|9:710 690,725 700,705 715|6:755 674,800 674|1:720 755,790 778|0:790 778,1715 778|8:1065 685,1090 685,1095 700,1065 705,1065 685|9:995 695,1040 710`],
 [750, 560, `
 5:590 778,657 753,635 740,650 725,715 712,720 700,790 680,770 655,745 640,740 628,690 622,640 620,620 608,560 605,510 605,460 620,400 650,432 612,385 600,375 588,335 600,300 615,270 615,240 625,200 620,150 622,85 628,60 650,0 678
 3:50 0,75 15,130 8,150 15,180 15,190 35,185 60,205 90,215 150,203 190,225 270,235 325,245 332,300 320,320 285,350 250,350 210,390 180,385 90,400 65,450 0
 2:205 95,240 100,245 115,270 115,270 190,203 190|2:270 195,320 195,335 180,345 160|1:203 190,262 198,262 230,253 270,250 285,230 285|2:255 270,290 250,325 235,320 205,300 195|2:320 180,345 190,340 215,325 235,330 275|2:315 125,345 130,365 148,390 143|2:325 60,355 62,385 90|2:325 60,320 130,320 155,275 145|3:345 130,355 165,352 190,342 165|3:250 0,245 60,225 90,205 95|3:320 10,330 30,325 60,320 80|2:350 20,355 40,350 60|1:395 20,395 65|3:295 292,305 285,310 292,300 300,295 292|3:190 35,220 35,220 70,205 90|2:190 10,245 15,320 15
 4:450 150,452 185,430 240,420 260,405 255,403 230,415 200,435 175,450 150|5:408 148,420 158
 4:850 250,885 230,920 195,950 175,965 190,985 155,1020 160,1010 190,1030 215,1045 190,1055 150,1070 230,1085 290,1065 340,1005 400,970 408,950 395,955 355,940 375,938 342,910 335,870 352,830 358,822 348,835 330,835 290,850 250|8:940 345,945 375,958 380|4:955 420,980 418,960 448,948 445,955 420|4:1145 395,1155 425,1110 455,1040 495,1027 495,1100 450,1140 420,1145 395
 5:750 0,775 40,800 85,820 105,830 70,805 40,790 0|6:765 20,790 65|6:825 105,850 118,900 125,925 130|7:920 130,990 122,935 148|6:835 115,880 128,960 126|6:850 20,845 50,860 75,890 85,905 60,905 30,940 15|5:855 30,885 30,900 10|7:915 100,925 60,965 65,935 75,950 100,930 85,930 105|8:925 55,945 50,965 55|6:985 60,1000 70,1010 60,1055 75,1100 100,1120 110,1150 90|4:1054 75,1054 135,1020 120,1000 95,990 75|8:970 30,980 60,1000 85|8:1070 90,1110 125,1100 105|8:805 40,820 55|7:985 55,1020 85|8:1170 130,1190 160|8:1205 190,1210 240|6:505 458,512 462|5:815 650,820 640|5:985 525,987 545|8:965 40,975 50,970 65|8:1000 60,1030 75,1040 90|7:775 0,800 40,815 50`]
];
const SPECKS = [[375,280,'517 636,535 727,853 626,1066 572,1082 580,1100 590,1146 628,1215 320,1216 390,1222 398,1092 760,1100 768,238 680,248 688,257 705,200 855,211 874,906 530,457 338,863 784'],[750,280,'820 262,398 238,203 291,90 320,1060 720,1068 760,972 590,1010 640,1094 661,780 800,400 240'],[375,560,'211 34,229 92,97 200,140 195,150 196,165 241,242 245,355 307,566 290,167 346,768 335,758 335,1213 181,1177 352,1192 379,1157 116,856 622,249 262'],[750,560,'88 181,31 116,52 352,67 379,339 432,418 432,517 492,587 372,1154 337,1090 352,1052 529,921 550,817 144,758 157,431 130,492 90,1230 272,170 42,178 60,1012 503']];
/* Points of the highlighted layer: [x1,y1,x2,y2,spread,count] on the same sheets. */
const GLOW = [
 [375,280,[[160,607,171,614,0,2],[188,640,188,640,0,1],[206,660,206,660,0,1],[158,726,158,726,0,1],[182,832,182,832,1,2],[761,667,763,682,2,4],[711,705,711,705,0,1],[731,709,731,709,0,1],[748,718,759,714,4,6],[681,748,681,753,1,4],[733,759,740,759,0,2]]],
 [750,280,[[353,677,375,708,2,12],[375,708,392,742,2,16],[392,742,406,776,3,26],[447,682,450,686,7,9],[597,791,603,805,2,8],[605,825,608,850,3,14],[607,845,609,875,7,60],[608,870,610,897,2,14],[873,710,873,710,0,1],[850,748,850,748,6,6],[873,800,873,840,13,15],[996,706,996,706,0,1],[1190,702,1190,702,0,1],[1220,746,1220,746,0,1],[1010,824,1010,824,5,8],[1030,812,1045,803,7,5],[1070,824,1095,820,7,10],[1100,818,1130,818,12,17],[1125,825,1165,832,12,8],[1183,782,1183,795,2,3],[1210,780,1235,790,14,14],[1220,800,1255,820,17,20],[1265,862,1275,898,2,9]]],
 [375,560,[[118,88,118,90,10,18],[120,142,128,147,1,3],[78,172,98,167,4,6],[105,188,105,188,0,1],[134,191,134,191,0,1],[168,162,168,162,2,2],[197,152,197,152,1,1],[215,140,215,140,0,1],[190,183,190,183,0,1],[266,147,266,147,0,1],[92,215,112,248,4,26],[140,250,140,266,2,10],[117,263,117,263,0,1],[135,237,135,237,0,1],[180,250,180,250,0,1],[203,230,203,230,0,1],[225,252,233,238,1,3],[250,203,256,212,3,5],[265,210,292,218,4,12],[285,192,330,210,8,28],[315,205,358,230,8,26],[334,186,352,192,3,3],[358,220,374,224,3,3],[352,248,400,264,8,11],[270,261,320,275,3,7],[324,238,334,242,0,2],[464,272,464,272,0,1]]],
 [750,560,[[606,0,608,30,3,24],[608,35,610,58,2,6],[602,97,602,114,0,3],[461,132,461,132,3,3],[497,138,497,138,0,1],[513,189,513,189,0,1],[495,219,495,219,3,3],[480,226,480,226,0,1],[533,216,533,216,0,1],[948,177,948,177,3,3],[926,192,926,192,0,1],[896,206,896,206,3,3],[890,229,890,229,0,1],[832,303,832,303,3,3],[1078,65,1095,75,6,11],[1112,70,1140,92,10,18],[1088,95,1100,112,8,12],[1055,140,1085,145,6,24],[1062,145,1065,195,3,28],[1065,195,1075,230,3,16],[1075,230,1096,262,5,28],[1095,135,1108,152,4,12],[1105,135,1130,158,12,52],[1145,100,1178,142,9,34],[1175,98,1178,115,3,5],[1180,130,1192,155,5,7],[1165,160,1175,178,5,6],[1212,152,1212,192,4,8],[1208,205,1210,250,4,7],[1138,235,1136,262,6,8],[1172,230,1180,272,5,40],[1178,250,1190,270,4,10],[1262,245,1284,220,8,50],[1267,20,1281,70,2,12],[1285,110,1300,162,4,8],[1278,180,1278,180,0,1],[1099,336,1099,336,2,3],[1080,185,1080,210,2,3],[1137,0,1137,0,0,1]]]
];
function rng(seed) { return () => (seed = (seed * 16807) % 2147483647) / 2147483647; }
function coast(text, seed, minRough) {
  const rnd = rng(seed);
  let d = '';
  for (const item of text.split(/[|\n]/)) {
    const t = item.trim();
    if (!t) continue;
    const i = t.indexOf(':'), rough = +t.slice(0, i);
    if (rough < minRough) continue;
    const p = t.slice(i + 1).split(',').map(q => q.trim().split(' ').map(Number));
    d += 'M' + p[0].join(' ');
    for (let k = 1; k < p.length; k++) {
      const [ax, ay] = p[k - 1], [bx, by] = p[k];
      const n = rough ? Math.max(1, Math.round(Math.hypot(bx - ax, by - ay) / (rough > 6 ? 5 : 7))) : 1;
      for (let j = 1; j < n; j++) {
        const f = j / n;
        d += 'L' + (ax + (bx - ax) * f + (rnd() - .5) * rough * 1.5).toFixed(1) + ' ' + (ay + (by - ay) * f + (rnd() - .5) * rough * 1.5).toFixed(1);
      }
      d += 'L' + bx + ' ' + by;
    }
  }
  return d;
}
define('world-map', ':host{display:block;width:824px;height:583px;background:#000003}svg{display:block}', '<svg width="824" height="583"></svg>', function (r) {
  let s = '';
  SHEETS.forEach(([x, y, t], i) => {
    const at = `transform="translate(${x - 380} ${y - 284}) scale(.33333)" fill="none" stroke="#0b70b8" stroke-linejoin="round"`;
    s += `<path ${at} d="${coast(t, 77 + i * 31, 0)}" stroke-opacity=".92" stroke-width="3.300"/><path ${at} d="${coast(t, 505 + i * 13, 7)}" stroke-opacity=".6" stroke-width="3"/>`;
  });
  SPECKS.forEach(([x, y, t]) => { s += `<path transform="translate(${x - 380} ${y - 284}) scale(.33333)" d="${t.split(',').map(q => 'M' + q + 'h4v3h-4z').join('')}" fill="#0a5a94"/>`; });
  let dots = '';
  GLOW.forEach(([x, y, list], i) => {
    const rnd = rng(911 + i * 17);
    let d = '';
    for (const [a, b, c, e, sp, n] of list) for (let k = 0; k < n; k++) {
      const f = n > 1 ? k / (n - 1) : 0;
      const g = () => (rnd() + rnd() - 1) * sp * 1.3;
      const px = Math.round((a + (c - a) * f + g()) / 3) * 3 - 3, py = Math.round((b + (e - b) * f + g()) / 3) * 3 - 3;
      d += `M${px} ${py}h6v${rnd() > .4 ? 6 : 3}h-6z`;
    }
    dots += `<path transform="translate(${x - 380} ${y - 284}) scale(.33333)" d="${d}"/>`;
  });
  s += `<filter id="b" x="-5%" y="-5%" width="110%" height="110%"><feGaussianBlur stdDeviation="2.400"/></filter><g fill="#e320e3" filter="url(#b)">${dots}</g><g fill="#fb30fb">${dots}</g>`;
  r.querySelector('svg').innerHTML = s;
});

define('layout-canvas', `:host{display:block;flex:1;height:848px;position:relative;background:#d7d7d7;border:2px solid #31556c;border-radius:2px;overflow:hidden}
 .sh{position:absolute;left:323px;top:137px;width:824px;height:583px;background:#979797}
 .pg{position:absolute;left:316px;top:130px;width:824px;height:583px}
 .sel{position:absolute;inset:0;width:824px;height:583px}
 .tip{position:absolute;left:769px;top:544px;width:54px;height:30px;background:rgba(176,176,176,.96);border:1px solid #3a3a3a;box-shadow:2px 3px 3px rgba(0,0,0,.35);display:flex;align-items:center;justify-content:center;color:#cfcfcf;font:14.500px ${UI}}`,
 `<div class="sh"></div><div class="pg"><world-map></world-map>
 <svg class="sel" viewBox="0 0 824 583"><rect x=".5" y=".5" width="823" height="582" fill="none" stroke="#6b0038"/><rect x=".5" y=".5" width="823" height="582" fill="none" stroke="#3498d0" stroke-dasharray="3 3"/>
 <g fill="#fff" stroke="#3d8fc6"><path d="M.5.5h10v10H.5zM406.500.5h10v10h-10zM813.500.5h10v10h-10zM.5 286.500h10v10H.5zM813.500 286.500h10v10h-10zM.5 572.500h10v10H.5zM406.500 572.500h10v10h-10zM813.500 572.500h10v10h-10z"/></g></svg>
 <div class="tip"><fit-text w="41">Map 1</fit-text></div></div>`);

/* ---------- docks ---------- */
define('dock-tab', `:host{display:flex;align-items:center;justify-content:center;height:22px;border:1px solid #3b3b3b;border-bottom:0;border-radius:3px 3px 0 0;color:#b5b5b5;font:12.500px ${DLG};background:#2c2c2c}
 :host([on]){height:24px;background:linear-gradient(#525252,#343434);border-color:#484848;padding-bottom:0}`, '<slot></slot>');
define('dock-tabs', ':host{display:flex;align-items:flex-end;height:25px;gap:0}.l{flex:1;align-self:flex-end;height:1px;background:#fff}', '<slot></slot><div class="l"></div>');
define('dock-title', `:host{display:flex;align-items:center;height:19px;background:linear-gradient(#2d2d2d,#3b3b3b 30%,#333);color:#bdbdbd;font:14.500px ${UI};padding:1px 0 0 14px;flex:none}.s{flex:1}q-icon{width:10px;height:10px;margin:-3px 2.500px 0 1.500px}`,
 '<slot></slot><div class="s"></div><q-icon n="float"></q-icon><q-icon n="close"></q-icon>');

define('items-dock', `:host{display:flex;flex-direction:column;height:265px;flex:none;width:389px}
 .tree{flex:1;background:#1f1f1f;border:1px solid #3a3a3a;border-radius:3px 3px 0 0;padding:2px}
 .hd{display:flex;height:23px;background:#3a3a3a;border:1px solid #757575;color:#b5b5b5;font:12.500px ${DLG}}
 .hd>div{display:flex;align-items:center;border-right:2px solid #6c6c6c}.hd>div:last-child{border:0;flex:1;padding:0 0 4px 4px}
 .row{display:flex;align-items:center;height:24px;color:#c8c8c8;font:bold 14px ${UI};padding-left:1px}
 .bx{width:17px;height:17px;border:1px solid #181818;display:flex;align-items:center;justify-content:center}`,
 `<dock-tabs><dock-tab on style="width:43px"><fit-text w="32">Items</fit-text></dock-tab><dock-tab style="width:83px"><fit-text w="72">Undo History</fit-text></dock-tab></dock-tabs>
 <dock-title><fit-text w="38">Items</fit-text></dock-title>
 <div class="tree"><div class="hd"><div style="width:43px;padding-left:4px"><q-icon n="eyeg" style="width:20px;height:20px"></q-icon></div><div style="width:43px;padding-left:3px"><q-icon n="padlock" style="width:22px;height:22px"></q-icon></div><div><fit-text w="26">Item</fit-text></div></div>
 <div class="row"><div class="bx"><q-icon n="check" style="width:14px;height:14px"></q-icon></div><div class="bx" style="margin-left:26px"></div><q-icon n="sheet" style="width:20px;height:20px;margin:-2px 6px 0 26px"></q-icon><fit-text w="43" style="margin-top:-1px">Map 1</fit-text></div></div>`);

define('group-box', `:host{display:block;width:349px;border:1px solid #383838;border-radius:7px;flex:none;color:#b9b9b9;font:12.500px ${DLG}}
 .t{display:flex;align-items:center;width:var(--tw,100px);height:18px;margin:-8px 0 0 -1px;padding:2px 0 0 3px;background:#2f2f2f;font:bold 12.500px "DejaVu Sans",sans-serif;font-stretch:condensed;color:#c6c6c6}
 svg{margin-right:18px}.c{padding:0 0 0 11px}`,
 '<div class="t"><svg width="11" height="8"><path d="M1 1h9.500L5.700 6.500z" fill="none" stroke="#141414" stroke-width="1.300"/></svg><slot name="title"></slot></div><div class="c"><slot></slot></div>');
define('prop-row', ':host{display:flex;align-items:center;height:24px;margin-top:10px}.l{width:var(--lw,79px);flex:none;display:flex}q-icon{width:22px;height:22px;margin-left:12px}',
 '<div class="l"><slot name="label"></slot></div><slot></slot><q-icon n="ddef"></q-icon>');
define('text-field', `:host{display:flex;align-items:center;justify-content:space-between;flex:none;width:208px;height:100%;background:#1f1f1f;border:1px solid #3a3a3a;border-radius:3px;color:#c4c4c4;padding:0 7px 0 3.500px}
 i{border:4px solid transparent;border-top:4px solid #a5a5a5;border-bottom:0}:host([plain]) .r,:host(:not([spin])) .sp{display:none}
 :host([spin]) .r{border-top:0;border-bottom:4px solid #a5a5a5;margin-right:-4px}.sp{margin-right:6px}.m{flex:1}`,
 '<i class="sp"></i><div class="m"><slot></slot></div><i class="r"></i>');
define('check-line', `:host{display:flex;align-items:center;gap:7px;height:16px;flex:none}svg{width:11px;height:11px;flex:none}rect{fill:none;stroke:#c4c4c4}path{display:none}:host([off]){color:#3f3f3f}:host([off]) rect{stroke:#444}
 :host([on]) path{display:block}:host([on]) rect{fill:#3a3a3a}`, '<svg viewBox="0 0 11 11"><rect x=".5" y=".5" width="10" height="10"/><path d="M3 3l5 5M8 3l-5 5" stroke="#ddd" stroke-width="2.400"/></svg><slot></slot>');
define('icon-button', ':host{display:flex;align-items:center;justify-content:center;width:27px;height:26px;margin-left:8px;background:#353535;border:1px solid #555;border-radius:3px;flex:none}q-icon{width:20px;height:20px}', '<q-icon></q-icon>', function (r) {
  const q = r.querySelector('q-icon'), n = document.createElement('q-icon'); n.setAttribute('n', this.getAttribute('n')); q.replaceWith(n);
});
define('collapsed-group', `:host{display:flex;align-items:center;height:29px;flex:none;font:bold 12.500px "DejaVu Sans",sans-serif;color:#c6c6c6}:host([off]){color:#414141}svg{margin:-3px 17px 0 5px}i{width:17px;height:17px;border:1px solid #272727;margin-right:9px;margin-top:-3px}`,
 '<svg width="8" height="12"><path d="M1 1v9.500L6.500 5.700z" fill="none" stroke="#161616" stroke-width="1.200"/></svg><i></i><slot></slot>');

define('properties-dock', `:host{display:flex;flex-direction:column;height:593px;width:389px;flex:none}
 .name{height:20px;background:#c8c8c8;border-radius:3px 0 0 3px;display:flex;align-items:center;padding-left:5px;color:#bebebe;font:bold 12.500px "DejaVu Sans",sans-serif;flex:none}
 .tb{height:29px;display:flex;align-items:center;border:1px solid #383838;border-width:0 0 2px 1px;padding-left:6px;flex:none}
 .tb q-icon{width:16px;height:16px;margin-right:9px}.tb i{width:1px;height:9px;background:#555a63;margin:0 8px 0 -1px}
 .sc{display:flex;height:499px;flex:none;overflow:hidden;border:1px solid #383838;border-width:0 0 1px 1px}
 .ct{display:flex;flex-direction:column;width:361px;padding:18px 0 0 11px;flex:none}
 .sb{width:15px;margin-left:12px;display:flex;flex-direction:column;align-items:center;padding-top:3px}
 .tr{width:15px;height:474px;margin-top:3px;background:#252525;border:1px solid #1d1d1d;border-radius:5px;flex:none}.th{height:221px;background:linear-gradient(90deg,#4f4f4f,#686868 40%,#5c5c5c);border-radius:5px}
 .u{border:5px solid transparent;border-bottom:7px solid #888;border-top:0;margin-right:4px}.d{border:5px solid transparent;border-top:8px solid #a8a8a8;border-bottom:0;margin:3px 4px 0 0}`,
 `<dock-tabs><dock-tab style="width:48px"><fit-text w="37">Layout</fit-text></dock-tab><dock-tab on style="width:99px"><fit-text w="88">Item Properties</fit-text></dock-tab><dock-tab style="width:49px"><fit-text w="38">Guides</fit-text></dock-tab></dock-tabs>
 <dock-title><fit-text w="106">Item Properties</fit-text></dock-title>
 <div class="name"><fit-text w="39">Map 1</fit-text></div>
 <div class="tb"><q-icon n="refresh"></q-icon><i></i><q-icon n="setview"></q-icon><q-icon n="getview"></q-icon><i></i><q-icon n="setscale"></q-icon><q-icon n="getscale"></q-icon><i></i><q-icon n="bookmark"></q-icon><q-icon n="interactive"></q-icon><i></i><q-icon n="abc"></q-icon><q-icon n="clip"></q-icon></div>
 <div class="sc"><div class="ct">
 <group-box style="height:142px;--tw:151px"><fit-text slot="title" w="102">Main Properties</fit-text>
  <prop-row style="margin-top:3px"><fit-text slot="label" w="31">Scale</fit-text><text-field plain><fit-text w="63">114822265</fit-text></text-field></prop-row>
  <prop-row><fit-text slot="label" w="72">Map rotation</fit-text><text-field spin><fit-text w="35">0.00 º</fit-text></text-field></prop-row>
  <prop-row style="height:27px;margin-top:9px"><fit-text slot="label" w="23">CRS</fit-text><text-field style="width:174px;padding:0 4px 0 1.500px"><fit-text w="93">Use Project CRS</fit-text></text-field><icon-button n="globe" style="margin-left:7px"></icon-button></prop-row>
  <check-line on style="margin-top:7px"><fit-text w="137">Draw map canvas items</fit-text></check-line>
 </group-box>
 <group-box style="height:108px;margin-top:13px;--tw:93px"><fit-text slot="title" w="44">Layers</fit-text>
  <prop-row style="height:24px;margin-top:3px;--lw:148px"><check-line slot="label"><fit-text w="106">Follow map theme</fit-text></check-line><text-field style="width:139px;padding:0 4px 0 1px"><fit-text w="39">(none)</fit-text></text-field></prop-row>
  <prop-row style="height:26px;margin-top:9px;--lw:252px"><check-line slot="label"><fit-text w="63">Lock layers</fit-text></check-line><icon-button n="eyeb"></icon-button></prop-row>
  <check-line off style="margin-top:8px"><fit-text w="119">Lock styles for layers</fit-text></check-line>
 </group-box>
 <group-box style="height:153px;margin-top:13px;--tw:98px;--lw:42px"><fit-text slot="title" w="49">Extents</fit-text>
  <prop-row style="margin-top:3px"><fit-text slot="label" w="33">X min</fit-text><text-field plain style="width:245px"><fit-text w="86">-17049102.573</fit-text></text-field></prop-row>
  <prop-row><fit-text slot="label" w="32">Y min</fit-text><text-field plain style="width:245px"><fit-text w="86">-11970476.887</fit-text></text-field></prop-row>
  <prop-row><fit-text slot="label" w="36">X max</fit-text><text-field plain style="width:245px"><fit-text w="81">17053110.213</fit-text></text-field></prop-row>
  <prop-row><fit-text slot="label" w="36">Y max</fit-text><text-field plain style="width:245px"><fit-text w="81">12142198.820</fit-text></text-field></prop-row>
 </group-box>
 <collapsed-group style="margin-top:3px"><fit-text w="104">Temporal Range</fit-text></collapsed-group>
 <collapsed-group off><fit-text w="124">Controlled by Atlas</fit-text></collapsed-group>
 </div><div class="sb"><i class="u"></i><div class="tr"><div class="th"></div></div><i class="d"></i></div></div>`);

define('status-bar', `:host{display:flex;align-items:center;height:30px;padding:2px 0 0 7px;color:#bdbdbd;font:14.500px ${UI}}
 .s{flex:1}.g{display:flex;width:540px;align-items:center;font:12.500px ${DLG}}.g>*{flex:none}
 .cb{display:flex;align-items:center;justify-content:space-between;width:114px;height:24px;border:1px solid #3c3c3c;border-radius:3px;background:#232323;padding:0 4px 0 4px}
 .cb i{border:4px solid transparent;border-top:4px solid #aaa;border-bottom:0}
 .sl{width:98px;height:8px;margin-left:7px;background:#222;border:1px solid #1a1a1a;border-radius:4px;display:flex;align-items:center;padding-left:4px}
 .kn{width:15px;height:15px;border-radius:50%;background:linear-gradient(#8d8d8d,#747474);flex:none}`,
 `<fit-text w="99">1 item selected</fit-text><div class="s"></div>
 <div class="g"><fit-text w="88" style="margin-right:19px">x: 276.466 mm</fit-text><fit-text w="87" style="margin-right:19px">y: 190.318 mm</fit-text><fit-text w="44" style="margin-right:62px">page: 1</fit-text><div class="cb"><fit-text w="37">58.7%</fit-text><i></i></div><div class="sl"><div class="kn"></div></div></div>`);

define('layout-window', `:host{display:flex;flex-direction:column;position:relative;width:1920px;height:1033px;background:#2f2f2f;overflow:hidden}
 .r{display:flex;height:37px;flex:none}.body{display:flex;height:872px;flex:none}
 .left{display:flex;flex-direction:column;width:1485px;flex:none}.row{display:flex;flex:1}
 .dock{display:flex;flex-direction:column;width:389px;margin-left:8px;padding-top:0}
 .strip{height:3px;background:linear-gradient(90deg,#1b171a,#241a1d 20%,#181618 76%,#454246 76.500% 78.800%,#1b171a 79%)}
 .mark{position:absolute;left:1522px;top:393px;width:397px;height:620px;border:5px solid #ed1c24}`,
 `<title-bar></title-bar><menu-bar></menu-bar>
 <div class="r"><tool-bar style="width:468px" icons="save | newlayout duplicate manager folder saveas | newpage | print image svg pdf undo redo"></tool-bar><tool-bar style="flex:1" icons="atlas first prev combo next last printoff imageoff drop atlasset"></tool-bar></div>
 <div class="r"><tool-bar style="width:180px" icons="zin zout zone zfull refresh"></tool-bar><tool-bar style="flex:1" icons="lock unlock group ungroup raise align distribute resize"></tool-bar></div>
 <div class="body"><tool-box></tool-box><div class="left"><h-ruler></h-ruler><div class="row"><v-ruler></v-ruler><layout-canvas></layout-canvas></div></div>
 <div class="dock"><items-dock style="margin-top:1px"></items-dock><properties-dock style="margin-top:13px"></properties-dock></div></div>
 <status-bar></status-bar><div class="strip"></div><div class="mark"></div>`);
</script>
</body>
</html>
